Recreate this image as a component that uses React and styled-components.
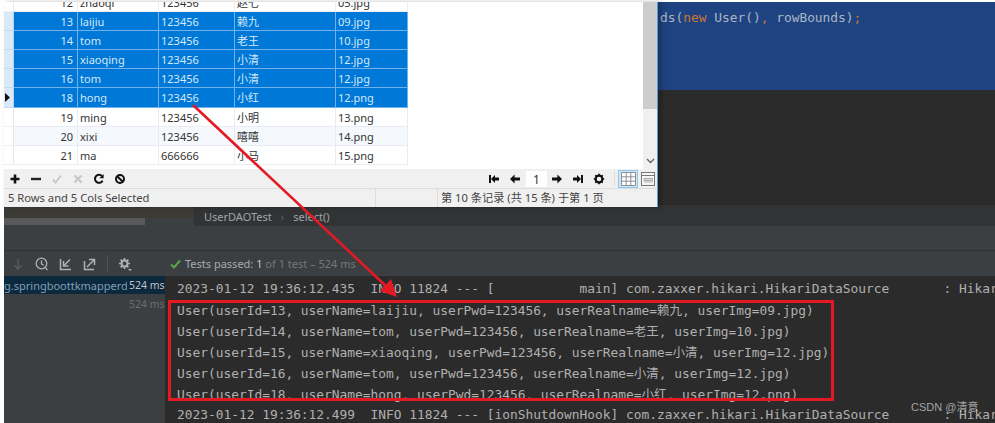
import React from 'react';
import styled, { createGlobalStyle } from 'styled-components';

const GlobalStyle = createGlobalStyle`
  html, body { margin: 0; padding: 0; background: #fff; }
  * { box-sizing: border-box; }
`;

const UI_FONT = `"Noto Sans", "Noto Sans CJK SC", sans-serif`;
const MONO_FONT = `"DejaVu Sans Mono", "Noto Sans CJK SC", monospace`;

const Page = styled.div`
  position: relative;
  width: 995px;
  height: 423px;
  padding: 2px 0 0 4px;
  overflow: hidden;
  background: #fff;
  display: flex;
  flex-direction: column;
`;

const TopRow = styled.div`
  display: flex;
  height: 205px;
  flex: none;
`;

const DbWindow = styled.div`
  position: relative;
  z-index: 1;
  width: 654px;
  flex: none;
  display: flex;
  flex-direction: column;
  background: #fff;
  border-right: 1px solid #5a9bd0;
  border-bottom: 1px solid #4f94cc;
  box-shadow: 3px 0 5px rgba(0, 0, 0, 0.25);
  font: 11px ${UI_FONT};
`;

const TableArea = styled.div`
  display: flex;
  height: 167px;
  flex: none;
  overflow: hidden;
`;

const TableView = styled.div`
  flex: 1;
  overflow: hidden;
`;

const Rows = styled.div`
  margin-top: -9.5px;
  width: 404px;
`;

const Row = styled.div`
  display: grid;
  grid-template-columns: 10px 64px 81px 76px 101px 72px;
  height: 19.2px;
  background: ${(p) => (p.$selected ? '#0078d7' : p.$alt ? '#f5f9fd' : '#fff')};
  color: ${(p) => (p.$selected ? '#d4e8f9' : '#333')};
`;

const RowHead = styled.div`
  display: flex;
  align-items: center;
  background: ${(p) => (p.$selected ? '#d9e9f7' : '#fff')};
  border-right: 1px solid ${(p) => (p.$selected ? '#b5d3ec' : '#e4e8ec')};
  border-bottom: 1px solid ${(p) => (p.$selected ? '#c4dcf1' : '#eceff3')};
`;

const Cell = styled.div`
  line-height: 19px;
  padding: 0 ${(p) => (p.$num ? '4px' : '0')} 0 ${(p) => (p.$num ? '0' : '2px')};
  text-align: ${(p) => (p.$num ? 'right' : 'left')};
  white-space: nowrap;
  overflow: hidden;
  border-right: 1px solid ${(p) => (p.$selected ? '#6fb1e8' : '#e8edf3')};
  border-bottom: 1px solid ${(p) => (p.$selected ? '#6fb1e8' : '#e8edf3')};
`;

const Scrollbar = styled.div`
  width: 14px;
  flex: none;
  background: #f0f0f0;
  display: flex;
  flex-direction: column;
  align-items: center;
`;

const ScrollThumb = styled.div`
  width: 100%;
  height: 107px;
  background: #cdcdcd;
`;

const ScrollArrow = styled.svg`
  margin-top: 49px;
  width: 9px;
  height: 6px;
`;

const Toolbar = styled.div`
  height: 20px;
  flex: none;
  display: flex;
  align-items: center;
  justify-content: space-between;
  background: #f0f0f0;
  border-bottom: 1px solid #dcdcdc;
  padding: 0 2px 0 5px;
`;

const IconGroup = styled.div`
  display: flex;
  align-items: center;
  gap: 9px;
`;

const ToolIcon = styled.svg`
  width: 12px;
  height: 12px;
  flex: none;
  display: block;
`;

const PageInput = styled.div`
  width: 21px;
  height: 16px;
  margin: 0 -5px 0 -4px;
  background: #fff;
  color: #333;
  text-align: center;
  line-height: 18px;
  font-size: 12px;
`;

const Separator = styled.div`
  width: 1px;
  height: 15px;
  margin-right: -6px;
  background: #dcdcdc;
`;

const ViewButton = styled.div`
  width: ${(p) => (p.$active ? 20 : 14)}px;
  height: 18px;
  display: flex;
  align-items: center;
  justify-content: center;
  margin-left: ${(p) => (p.$active ? 0 : -6)}px;
  background: ${(p) => (p.$active ? '#cde6f7' : 'transparent')};
  border: ${(p) => (p.$active ? '1px solid #92c6ea' : 'none')};
`;

const StatusBar = styled.div`
  flex: 1;
  display: grid;
  grid-template-columns: 372px 62px 1fr;
  align-items: stretch;
  background: #f0f0f0;
  color: #444;
  font-size: 11.2px;
  line-height: 18px;
`;

const StatusCell = styled.div`
  padding-left: ${(p) => p.$pad || 0}px;
  border-right: ${(p) => (p.$divider ? '1px solid #dcdcdc' : 'none')};
  white-space: nowrap;
`;

const CodePane = styled.div`
  flex: 1;
  display: flex;
  flex-direction: column;
  background: #2b2b2b;
  border-bottom: 2px solid #313335;
`;

const SelectedCode = styled.div`
  height: 88px;
  flex: none;
  background: #1f4280;
  padding: 7px 0 0 2px;
  font: 12.87px/17px ${MONO_FONT};
  color: #a9b7c6;
  white-space: pre;
`;

const Keyword = styled.span`
  color: #cc7832;
`;

const TabStrip = styled.div`
  height: 19px;
  flex: none;
  display: flex;
  background: #313335;
  font: 11px ${UI_FONT};
`;

const StripLeft = styled.div`
  width: 190px;
  flex: none;
  background: #3c3f41;
  display: flex;
  flex-direction: column;
`;

const StripTop = styled.div`
  height: 11px;
  background: #3d3b36;
`;

const StripThumb = styled.div`
  width: 141px;
  height: 7px;
  background: #57595b;
`;

const Breadcrumb = styled.div`
  display: flex;
  align-items: center;
  gap: 9px;
  padding-left: 10px;
  color: #a3a5a7;
`;

const Crumb = styled.span`
  color: #5e6163;
`;

const EmptyBar = styled.div`
  height: 25px;
  flex: none;
  background: #3c3f41;
  border-bottom: 1px solid #323232;
`;

const RunBar = styled.div`
  height: 25px;
  flex: none;
  display: flex;
  align-items: center;
  background: #3c3f41;
  font: 11px ${UI_FONT};
`;

const RunTools = styled.div`
  width: 166px;
  flex: none;
  display: flex;
  align-items: center;
  gap: 10px;
  padding-left: 7px;
`;

const RunIcon = styled.svg`
  width: 14px;
  height: 14px;
  flex: none;
  display: block;
`;

const RunDivider = styled.div`
  width: 1px;
  height: 18px;
  background: #515456;
`;

const TestStatus = styled.div`
  display: flex;
  align-items: center;
  gap: 4px;
  color: #a8aaac;
  white-space: pre;
`;

const Dim = styled.span`
  color: #75787a;
`;

const Strong = styled.span`
  color: #c4c6c8;
`;

const Body = styled.div`
  flex: 1;
  display: flex;
  min-height: 0;
`;

const TreePanel = styled.div`
  width: 161px;
  flex: none;
  background: #3c3f41;
  font: 11px ${UI_FONT};
`;

const TreeRow = styled.div`
  height: ${(p) => (p.$active ? 18 : 19)}px;
  display: flex;
  align-items: center;
  justify-content: flex-end;
  gap: 2px;
  padding-right: 4px;
  background: ${(p) => (p.$active ? '#0d293e' : 'transparent')};
`;

const TreeName = styled.div`
  flex: 1;
  min-width: 0;
  overflow: hidden;
  white-space: nowrap;
  color: #7e9fb6;
`;

const Duration = styled.div`
  width: 32px;
  flex: none;
  text-align: right;
  white-space: nowrap;
  font-size: 10.5px;
  color: ${(p) => (p.$active ? '#c0c2c4' : '#6b6e70')};
`;

const LogPanel = styled.div`
  position: relative;
  flex: 1;
  min-width: 0;
  background: #2b2b2b;
  padding: 2px 0 0 12px;
  overflow: hidden;
  font: 12.87px/21px ${MONO_FONT};
  color: #b0b0b0;
`;

const LogLine = styled.div`
  height: 21px;
  white-space: pre;
`;

const Cjk = styled.span`
  font: 12.5px/21px "Noto Sans CJK SC", sans-serif;
`;

const RedBox = styled.div`
  position: absolute;
  left: 3px;
  top: 24px;
  width: 666px;
  height: 101px;
  border: 3px solid #e41a23;
`;

const Arrow = styled.svg`
  position: absolute;
  left: 0;
  top: 0;
  z-index: 2;
  pointer-events: none;
`;

const Watermark = styled.div`
  position: absolute;
  left: 911px;
  top: 398px;
  z-index: 3;
  font: 11px/18px "Liberation Sans", "Noto Sans CJK SC", sans-serif;
  color: rgba(205, 205, 205, 0.75);
  white-space: nowrap;
`;

const rows = [
  { id: 12, name: 'zhaoqi', pwd: '123456', real: '赵七', img: '05.jpg' },
  { id: 13, name: 'laijiu', pwd: '123456', real: '赖九', img: '09.jpg', selected: true },
  { id: 14, name: 'tom', pwd: '123456', real: '老王', img: '10.jpg', selected: true },
  { id: 15, name: 'xiaoqing', pwd: '123456', real: '小清', img: '12.jpg', selected: true },
  { id: 16, name: 'tom', pwd: '123456', real: '小清', img: '12.jpg', selected: true },
  { id: 18, name: 'hong', pwd: '123456', real: '小红', img: '12.png', selected: true, current: true },
  { id: 19, name: 'ming', pwd: '123456', real: '小明', img: '13.png' },
  { id: 20, name: 'xixi', pwd: '123456', real: '嘻嘻', img: '14.png', alt: true },
  { id: 21, name: 'ma', pwd: '666666', real: '小马', img: '15.png' },
];

const Glyph = ({ children }) => <ToolIcon viewBox="0 0 12 12">{children}</ToolIcon>;

const DbTable = () => (
  <Rows>
    {rows.map((r) => (
      <Row key={r.id} $selected={r.selected} $alt={r.alt}>
        <RowHead $selected={r.selected}>
          {r.current && (
            <svg width="6" height="9" viewBox="0 0 6 9">
              <path d="M1 0l5 4.5L1 9z" fill="#111" />
            </svg>
          )}
        </RowHead>
        <Cell $num $selected={r.selected}>{r.id}</Cell>
        <Cell $selected={r.selected}>{r.name}</Cell>
        <Cell $selected={r.selected}>{r.pwd}</Cell>
        <Cell $selected={r.selected}>{r.real}</Cell>
        <Cell $selected={r.selected}>{r.img}</Cell>
      </Row>
    ))}
  </Rows>
);

const logRows = [
  ['User(userId=13, userName=laijiu, userPwd=123456, userRealname=', '赖九', ', userImg=09.jpg)'],
  ['User(userId=14, userName=tom, userPwd=123456, userRealname=', '老王', ', userImg=10.jpg)'],
  ['User(userId=15, userName=xiaoqing, userPwd=123456, userRealname=', '小清', ', userImg=12.jpg)'],
  ['User(userId=16, userName=tom, userPwd=123456, userRealname=', '小清', ', userImg=12.jpg)'],
  ['User(userId=18, userName=hong, userPwd=123456, userRealname=', '小红', ', userImg=12.png)'],
];

export default function App() {
  return (
    <Page>
      <GlobalStyle />
      <TopRow>
        <DbWindow>
          <TableArea>
            <TableView>
              <DbTable />
            </TableView>
            <Scrollbar>
              <ScrollThumb />
              <ScrollArrow viewBox="0 0 9 6">
                <path d="M1 1l3.5 3.5L8 1" fill="none" stroke="#666" strokeWidth="1.4" />
              </ScrollArrow>
            </Scrollbar>
          </TableArea>
          <Toolbar>
            <IconGroup>
              <Glyph><path d="M6 1.5v9M1.5 6h9" stroke="#111" strokeWidth="2.6" /></Glyph>
              <Glyph><path d="M1 6h10" stroke="#222" strokeWidth="2.4" /></Glyph>
              <Glyph><path d="M2 6.5l2.5 3L10 2.5" fill="none" stroke="#c9c9c9" strokeWidth="2" /></Glyph>
              <Glyph><path d="M2.5 2.5l7 7M9.5 2.5l-7 7" stroke="#c9c9c9" strokeWidth="2.4" /></Glyph>
              <Glyph>
                <path d="M9.6 7.6A4 4 0 1 1 9 3.2" fill="none" stroke="#111" strokeWidth="2" />
                <path d="M10.6 1v4.2H6.4z" fill="#111" />
              </Glyph>
              <Glyph>
                <circle cx="6" cy="6" r="4" fill="none" stroke="#111" strokeWidth="2" />
                <path d="M3.2 3.2l5.6 5.6" stroke="#111" strokeWidth="2" />
              </Glyph>
            </IconGroup>
            <IconGroup>
              <Glyph>
                <path d="M2 2v8" stroke="#111" strokeWidth="2" />
                <path d="M3 6l4-4v2.4h4v3.2H7V10z" fill="#111" />
              </Glyph>
              <Glyph><path d="M1 6l4.6-4.4v2.8H11v3.2H5.6v2.8z" fill="#111" /></Glyph>
              <PageInput>1</PageInput>
              <Glyph><path d="M11 6L6.4 1.6v2.8H1v3.2h5.4v2.8z" fill="#111" /></Glyph>
              <Glyph>
                <path d="M10 2v8" stroke="#111" strokeWidth="2" />
                <path d="M9 6L5 2v2.4H1v3.2h4V10z" fill="#111" />
              </Glyph>
              <Glyph>
                <circle cx="6" cy="6" r="3.4" fill="none" stroke="#111" strokeWidth="2.2" />
                <path d="M6 .8v2M6 9.2v2M.8 6h2M9.2 6h2M2.3 2.3l1.4 1.4M8.3 8.3l1.4 1.4M9.7 2.3L8.3 3.7M3.7 8.3L2.3 9.7" stroke="#111" strokeWidth="1.6" />
              </Glyph>
              <Separator />
              <ViewButton $active>
                <svg width="15" height="14" viewBox="0 0 15 14">
                  <path d="M.5.5h14v13H.5zM5.2.5v13M9.8.5v13M.5 4.8h14M.5 9.2h14" fill="#fff" stroke="#8b9097" />
                </svg>
              </ViewButton>
              <ViewButton>
                <svg width="14" height="14" viewBox="0 0 14 14">
                  <rect x=".5" y=".5" width="13" height="13" fill="#f7f7f7" stroke="#777" />
                  <path d="M.5 3.5h13" stroke="#777" />
                  <path d="M3 6.5h8.5v2H3zM3 10h8.5" fill="#e0e0e0" stroke="#999" strokeWidth=".8" />
                </svg>
              </ViewButton>
            </IconGroup>
          </Toolbar>
          <StatusBar>
            <StatusCell $pad={4} $divider>5 Rows and 5 Cols Selected</StatusCell>
            <StatusCell $divider />
            <StatusCell $pad={3}>第 10 条记录 (共 15 条) 于第 1 页</StatusCell>
          </StatusBar>
        </DbWindow>
        <CodePane>
          <SelectedCode>
            ds(<Keyword>new</Keyword> User()<Keyword>,</Keyword> rowBounds)<Keyword>;</Keyword>
          </SelectedCode>
        </CodePane>
      </TopRow>

      <TabStrip>
        <StripLeft>
          <StripTop />
          <StripThumb />
        </StripLeft>
        <Breadcrumb>
          <span>UserDAOTest</span>
          <Crumb>›</Crumb>
          <span>select()</span>
        </Breadcrumb>
      </TabStrip>
      <EmptyBar />
      <RunBar>
        <RunTools>
          <RunIcon viewBox="0 0 14 14">
            <path d="M7 2v10M3.5 8.5L7 12l3.5-3.5" fill="none" stroke="#5b5e60" strokeWidth="1.3" />
          </RunIcon>
          <RunIcon viewBox="0 0 14 14">
            <circle cx="6.5" cy="6.5" r="5.3" fill="none" stroke="#afb1b3" strokeWidth="1.3" />
            <path d="M6.5 3.5v3.3l2.2 1.4M10.5 11l2 2" fill="none" stroke="#afb1b3" strokeWidth="1.3" />
          </RunIcon>
          <RunIcon viewBox="0 0 14 14">
            <path d="M1.5 2v10.5H12M11 2.5L5 8.5M4.5 4v5h5" fill="none" stroke="#afb1b3" strokeWidth="1.5" />
          </RunIcon>
          <RunIcon viewBox="0 0 14 14">
            <path d="M1.5 4v8.5H11M4 10l7-7M6 2.5h5.5V8" fill="none" stroke="#afb1b3" strokeWidth="1.5" />
          </RunIcon>
          <RunDivider />
          <RunIcon viewBox="0 0 14 14">
            <circle cx="6.5" cy="6.5" r="3" fill="none" stroke="#afb1b3" strokeWidth="2" />
            <path d="M6.5 1v2M6.5 10v2M1 6.5h2M10 6.5h2M2.6 2.6L4 4M9 9l1.4 1.4M10.4 2.6L9 4M4 9l-1.4 1.4" stroke="#afb1b3" strokeWidth="1.7" />
            <path d="M10 12h4l-2 2z" fill="#afb1b3" />
          </RunIcon>
        </RunTools>
        <TestStatus>
          <svg width="11" height="10" viewBox="0 0 11 10">
            <path d="M1 5.5l3 3L10 1.5" fill="none" stroke="#5aa34e" strokeWidth="2" />
          </svg>
          <span>Tests passed: <Strong>1</Strong> <Dim>of 1 test – 524 ms</Dim></span>
        </TestStatus>
      </RunBar>
      <Body>
        <TreePanel>
          <TreeRow $active>
            <TreeName>g.springboottkmapperde</TreeName>
            <Duration $active>524 ms</Duration>
          </TreeRow>
          <TreeRow>
            <Duration>524 ms</Duration>
          </TreeRow>
        </TreePanel>
        <LogPanel>
          <LogLine>2023-01-12 19:36:12.435  INFO 11824 --- [           main] com.zaxxer.hikari.HikariDataSource       : HikariPool-1</LogLine>
          {logRows.map(([head, name, tail]) => (
            <LogLine key={head}>{head}<Cjk>{name}</Cjk>{tail}</LogLine>
          ))}
          <LogLine>2023-01-12 19:36:12.499  INFO 11824 --- [ionShutdownHook] com.zaxxer.hikari.HikariDataSource       : HikariPool-1</LogLine>
          <RedBox />
        </LogPanel>
      </Body>

      <Arrow width="995" height="423" viewBox="0 0 995 423">
        <path d="M193 105L388 288" stroke="#e41a23" strokeWidth="2.6" fill="none" />
        <path d="M397 297L380 291L391 279z" fill="#e41a23" />
      </Arrow>
      <Watermark>CSDN @清意</Watermark>
    </Page>
  );
}
